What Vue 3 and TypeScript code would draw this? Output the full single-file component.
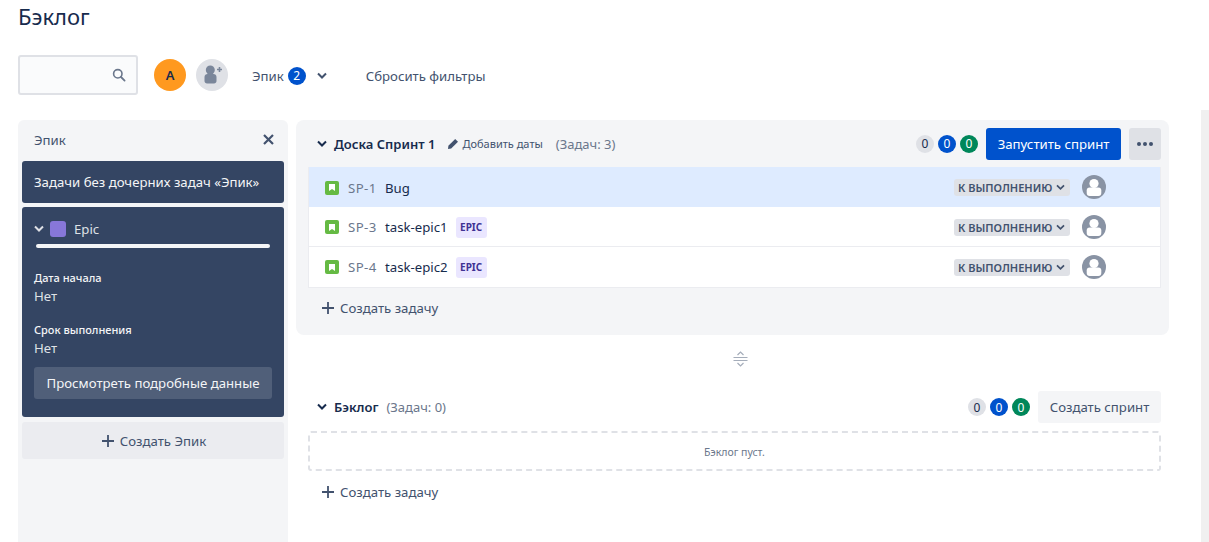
<template>
  <div class="page">
    <div class="main">
      <h1 class="title">Бэклог</h1>

      <div class="toolbar">
        <div class="search">
          <svg width="14" height="14" viewBox="0 0 14 14"><circle cx="5.8" cy="5.8" r="4.2" fill="none" stroke="#6b778c" stroke-width="1.6" /><path d="M9 9l3.6 3.6" stroke="#6b778c" stroke-width="1.8" stroke-linecap="round" /></svg>
        </div>
        <div class="avatar orange">A</div>
        <div class="avatar add">
          <svg width="24" height="24" viewBox="0 0 24 24" fill="#7a869a">
            <circle cx="10.300" cy="7" r="4.500" />
            <path d="M4.500 14c0-1.800 1.400-3 3-3h6c1.600 0 3 1.200 3 3v4c0 1.400-1.100 2.500-2.500 2.500h-7c-1.400 0-2.500-1.100-2.500-2.500z" />
            <path d="M19.500 4v5M17 6.500h5" stroke="#7a869a" stroke-width="1.600" fill="none" />
          </svg>
        </div>
        <div class="epic-filter">
          <span>Эпик</span>
          <span class="pill blue">2</span>
          <svg class="filter-chev" width="10" height="8" viewBox="0 0 10 8"><path d="M1 1.500l4 4 4-4" fill="none" stroke="#42526e" stroke-width="2" /></svg>
        </div>
        <span class="reset">Сбросить фильтры</span>
      </div>

      <div class="columns">
        <aside class="epics">
          <div class="epics-head">
            <span>Эпик</span>
            <svg width="11" height="11" viewBox="0 0 11 11"><path d="M1 1l9 9M10 1l-9 9" stroke="#42526e" stroke-width="2.200" /></svg>
          </div>
          <div class="dark-card no-epic">Задачи без дочерних задач «Эпик»</div>
          <div class="dark-card epic-card">
            <div class="epic-name">
              <svg width="10" height="8" viewBox="0 0 10 8"><path d="M1 1.500l4 4 4-4" fill="none" stroke="#dfe1e6" stroke-width="2" /></svg>
              <span class="swatch"></span>
              <span>Epic</span>
            </div>
            <div class="progress"></div>
            <div class="field-label first">Дата начала</div>
            <div class="field-value">Нет</div>
            <div class="field-label second">Срок выполнения</div>
            <div class="field-value">Нет</div>
            <div class="details">Просмотреть подробные данные</div>
          </div>
          <div class="create-epic">
            <svg class="plus" width="12" height="12" viewBox="0 0 12 12"><path d="M6 0v12M0 6h12" stroke="#42526e" stroke-width="1.800" /></svg>
            Создать Эпик
          </div>
        </aside>

        <section class="backlog">
          <div class="sprint">
            <div class="section-head">
              <svg width="10" height="8" viewBox="0 0 10 8"><path d="M1 1.500l4 4 4-4" fill="none" stroke="#172b4d" stroke-width="2" /></svg>
              <strong>Доска Спринт 1</strong>
              <svg class="pencil" width="12" height="12" viewBox="0 0 12 12"><path d="M8.200 1l2.800 2.800-6.800 6.800L1 11l.4-3.200z" fill="#42526e" /></svg>
              <span class="dates">Добавить даты</span>
              <span class="count">(Задач: 3)</span>
              <div class="head-right">
                <span class="pill gray">0</span>
                <span class="pill blue">0</span>
                <span class="pill green">0</span>
                <button class="start">Запустить спринт</button>
                <button class="more"><i></i><i></i><i></i></button>
              </div>
            </div>

            <div class="rows">
              <div v-for="t in tasks" :key="t.id" class="row" :class="{ selected: t.selected }">
                <span class="type">
                  <svg width="6" height="7" viewBox="0 0 6 7"><path d="M0 0h6v7L3 5 0 7z" fill="#fff" /></svg>
                </span>
                <span class="key">{{ t.id }}</span>
                <span class="summary">{{ t.title }}</span>
                <span v-if="t.epic" class="lozenge">EPIC</span>
                <span class="status">
                  К ВЫПОЛНЕНИЮ
                  <svg width="9" height="7" viewBox="0 0 10 8"><path d="M1 1.500l4 4 4-4" fill="none" stroke="#42526e" stroke-width="2" /></svg>
                </span>
                <svg class="assignee" width="24" height="24" viewBox="0 0 24 24">
                  <circle cx="12" cy="12" r="12" fill="#8993a4" />
                  <circle cx="12" cy="8.500" r="4.600" fill="#fff" />
                  <rect x="4.700" y="12.500" width="14.600" height="8.500" rx="3" fill="#fff" />
                </svg>
              </div>
            </div>
            <div class="create-task">
              <svg class="plus" width="12" height="12" viewBox="0 0 12 12"><path d="M6 0v12M0 6h12" stroke="#42526e" stroke-width="1.800" /></svg>
              Создать задачу
            </div>
          </div>

          <div class="divider">
            <svg width="15" height="16" viewBox="0 0 15 16" fill="none" stroke="#a5adba" stroke-width="1.200">
              <path d="M4.500 4l3-3 3 3M4.500 12l3 3 3-3" />
              <path d="M.5 6.500h14M.5 9.500h14" />
            </svg>
          </div>

          <div class="backlog-section">
            <div class="section-head">
              <svg width="10" height="8" viewBox="0 0 10 8"><path d="M1 1.500l4 4 4-4" fill="none" stroke="#172b4d" stroke-width="2" /></svg>
              <strong>Бэклог</strong>
              <span class="count near">(Задач: 0)</span>
              <div class="head-right">
                <span class="pill gray">0</span>
                <span class="pill blue">0</span>
                <span class="pill green">0</span>
                <button class="create-sprint">Создать спринт</button>
              </div>
            </div>
            <div class="empty">Бэклог пуст.</div>
            <div class="create-task">
              <svg class="plus" width="12" height="12" viewBox="0 0 12 12"><path d="M6 0v12M0 6h12" stroke="#42526e" stroke-width="1.800" /></svg>
              Создать задачу
            </div>
          </div>
        </section>
      </div>
    </div>
    <div class="scrolltrack"></div>
  </div>
</template>

<script setup lang="ts">
interface Task {
  id: string
  title: string
  epic: boolean
  selected: boolean
}

const tasks: Task[] = [
  { id: 'SP-1', title: 'Bug', epic: false, selected: true },
  { id: 'SP-3', title: 'task-epic1', epic: true, selected: false },
  { id: 'SP-4', title: 'task-epic2', epic: true, selected: false },
]
</script>

<style>
html,
body {
  margin: 0;
  overflow: hidden;
}
</style>

<style scoped>
.page {
  display: flex;
  height: 542px;
  width: 1209px;
  overflow: hidden;
  background: #fff;
  font-family: "Noto Sans", "Open Sans", sans-serif;
  font-size: 13.2px;
  color: #172b4d;
}

.main {
  width: 1169px;
  padding-left: 18px;
  box-sizing: border-box;
  flex: none;
}

.title {
  margin: 0;
  height: 55px;
  font-size: 22px;
  font-weight: 400;
  line-height: 33px;
}

.toolbar {
  display: flex;
  align-items: center;
  height: 40px;
}

.search {
  width: 120px;
  height: 40px;
  box-sizing: border-box;
  border: 2px solid #dfe1e6;
  border-radius: 3px;
  background: #fafbfc;
  display: flex;
  align-items: center;
  justify-content: flex-end;
  padding-right: 10px;
}

.avatar {
  width: 32px;
  height: 32px;
  border-radius: 50%;
  display: flex;
  align-items: center;
  justify-content: center;
}

.avatar.orange {
  margin-left: 16px;
  background: #ff991f;
  font-weight: 600;
  font-size: 13px;
  color: #172b4d;
}

.avatar.add {
  margin-left: 10px;
  background: #dfe1e6;
}

.epic-filter {
  margin-left: 24px;
  display: flex;
  align-items: center;
  color: #42526e;
  padding-top: 1px;
}

.epic-filter .pill {
  margin-left: 4px;
}

.filter-chev {
  margin-left: 11px;
}

.reset {
  margin-left: 39px;
  color: #42526e;
  padding-top: 1px;
}

.pill {
  width: 18px;
  height: 18px;
  border-radius: 9px;
  display: inline-flex;
  align-items: center;
  justify-content: center;
  font-size: 12px;
  flex: none;
}

.pill.gray {
  background: #dfe1e6;
  color: #172b4d;
}

.pill.blue {
  background: #0052cc;
  color: #fff;
}

.pill.green {
  background: #00875a;
  color: #fff;
}

.columns {
  display: flex;
  margin-top: 25px;
  gap: 8px;
}

.epics {
  width: 270px;
  height: 422px;
  flex: none;
  box-sizing: border-box;
  padding: 0 4px;
  background: #f4f5f7;
  border-radius: 6px 6px 0 0;
}

.epics-head {
  height: 41px;
  padding: 0 10px 2px 12px;
  box-sizing: border-box;
  display: flex;
  align-items: center;
  justify-content: space-between;
  color: #42526e;
}

.dark-card {
  background: #344563;
  color: #f4f5f7;
  border-radius: 3px;
  padding: 0 12px;
}

.no-epic {
  height: 42px;
  display: flex;
  align-items: center;
}

.epic-card {
  margin-top: 4px;
  height: 210px;
  box-sizing: border-box;
  padding-top: 14px;
}

.epic-name {
  display: flex;
  align-items: center;
  height: 16px;
  color: #dfe1e6;
}

.swatch {
  width: 16px;
  height: 16px;
  border-radius: 3px;
  background: #8777d9;
  margin: 0 8px 0 6px;
}

.progress {
  height: 4px;
  margin: 7px 2px 0;
  background: #f4f5f7;
  border-radius: 2px;
}

.field-label {
  font-size: 11px;
  font-weight: 500;
  line-height: 16px;
}

.field-label.first {
  margin-top: 22px;
}

.field-label.second {
  margin-top: 16px;
}

.field-value {
  line-height: 20px;
  color: #dfe1e6;
}

.details {
  margin-top: 9px;
  height: 32px;
  background: #505f79;
  border-radius: 3px;
  display: flex;
  align-items: center;
  justify-content: center;
}

.create-epic {
  margin-top: 5px;
  height: 37px;
  background: #ebecf0;
  border-radius: 3px;
  display: flex;
  align-items: center;
  justify-content: center;
  gap: 6px;
  color: #42526e;
  padding: 1px 0 0 2px;
  box-sizing: border-box;
}

.backlog {
  flex: 1;
  min-width: 0;
}

.sprint {
  background: #f4f5f7;
  border-radius: 8px;
  height: 215px;
  padding: 0 8px 0 12px;
  box-sizing: border-box;
}

.section-head {
  display: flex;
  align-items: center;
  height: 47px;
  padding-left: 9px;
}

.section-head strong {
  margin-left: 7px;
  font-size: 13px;
  font-weight: 600;
  color: #172b4d;
}

.pencil {
  margin-left: 12px;
}

.dates {
  margin-left: 3px;
  font-size: 11px;
  color: #42526e;
}

.count {
  margin-left: 13px;
  font-size: 13px;
  color: #6b778c;
}

.count.near {
  margin-left: 8px;
}

.head-right {
  margin-left: auto;
  display: flex;
  align-items: center;
  gap: 4px;
}

.start {
  margin-left: 4px;
  height: 32px;
  width: 135px;
  border: 0;
  border-radius: 3px;
  background: #0052cc;
  color: #fff;
  font: inherit;
}

.more {
  margin-left: 4px;
  width: 32px;
  height: 32px;
  border: 0;
  border-radius: 3px;
  background: #dfe1e6;
  display: flex;
  align-items: center;
  justify-content: center;
  gap: 2px;
  padding: 0;
}

.more i {
  width: 4px;
  height: 4px;
  border-radius: 50%;
  background: #42526e;
}

.rows {
  background: #fff;
  border: 1px solid #ebecf0;
  border-top: 0;
}

.row {
  height: 40px;
  box-sizing: border-box;
  display: flex;
  align-items: center;
  padding: 1px 90px 0 16px;
  position: relative;
  border-bottom: 1px solid #ebecf0;
}

.row:last-child {
  border-bottom: 0;
  padding-top: 0;
}

.row.selected {
  background: #deebff;
  border-bottom: 0;
}

.type {
  width: 14px;
  height: 14px;
  border-radius: 2px;
  background: #65ba43;
  display: flex;
  align-items: center;
  justify-content: center;
  flex: none;
}

.key {
  margin-left: 9px;
  color: #6b778c;
  width: 37px;
  letter-spacing: 0.4px;
}

.summary {
  color: #172b4d;
}

.lozenge {
  margin-left: 8px;
  height: 21px;
  width: 31px;
  border-radius: 3px;
  background: #eae6ff;
  color: #403294;
  font-size: 10px;
  font-weight: 700;
  display: flex;
  align-items: center;
  justify-content: center;
}

.status {
  margin-left: auto;
  height: 17px;
  width: 116px;
  box-sizing: border-box;
  background: #dfe1e6;
  border-radius: 3px;
  font-size: 11px;
  font-weight: 600;
  color: #42526e;
  display: flex;
  align-items: center;
  justify-content: space-between;
  padding: 0 5px 0 4px;
  white-space: nowrap;
}

.assignee {
  position: absolute;
  right: 54px;
  top: 8px;
}

.create-task {
  height: 40px;
  padding-left: 14px;
  display: flex;
  align-items: center;
  gap: 6px;
  color: #42526e;
}

.divider {
  height: 48px;
  padding-left: 16px;
  display: flex;
  align-items: center;
  justify-content: center;
}

.backlog-section {
  padding: 8px 8px 0 12px;
}

.backlog-section .section-head {
  height: 32px;
}

.create-sprint {
  margin-left: 4px;
  width: 123px;
  height: 32px;
  border: 0;
  border-radius: 3px;
  background: #f4f5f7;
  color: #42526e;
  font: inherit;
}

.empty {
  margin-top: 8px;
  height: 40px;
  padding-top: 1px;
  box-sizing: border-box;
  border: 2px dashed #dfe1e6;
  border-radius: 3px;
  display: flex;
  align-items: center;
  justify-content: center;
  font-size: 10.500px;
  color: #6b778c;
}

.backlog-section .create-task {
  margin-top: 1px;
}

.scrolltrack {
  margin-left: 32px;
  margin-top: 110px;
  width: 8px;
  background: #f0f0f0;
}
</style>
